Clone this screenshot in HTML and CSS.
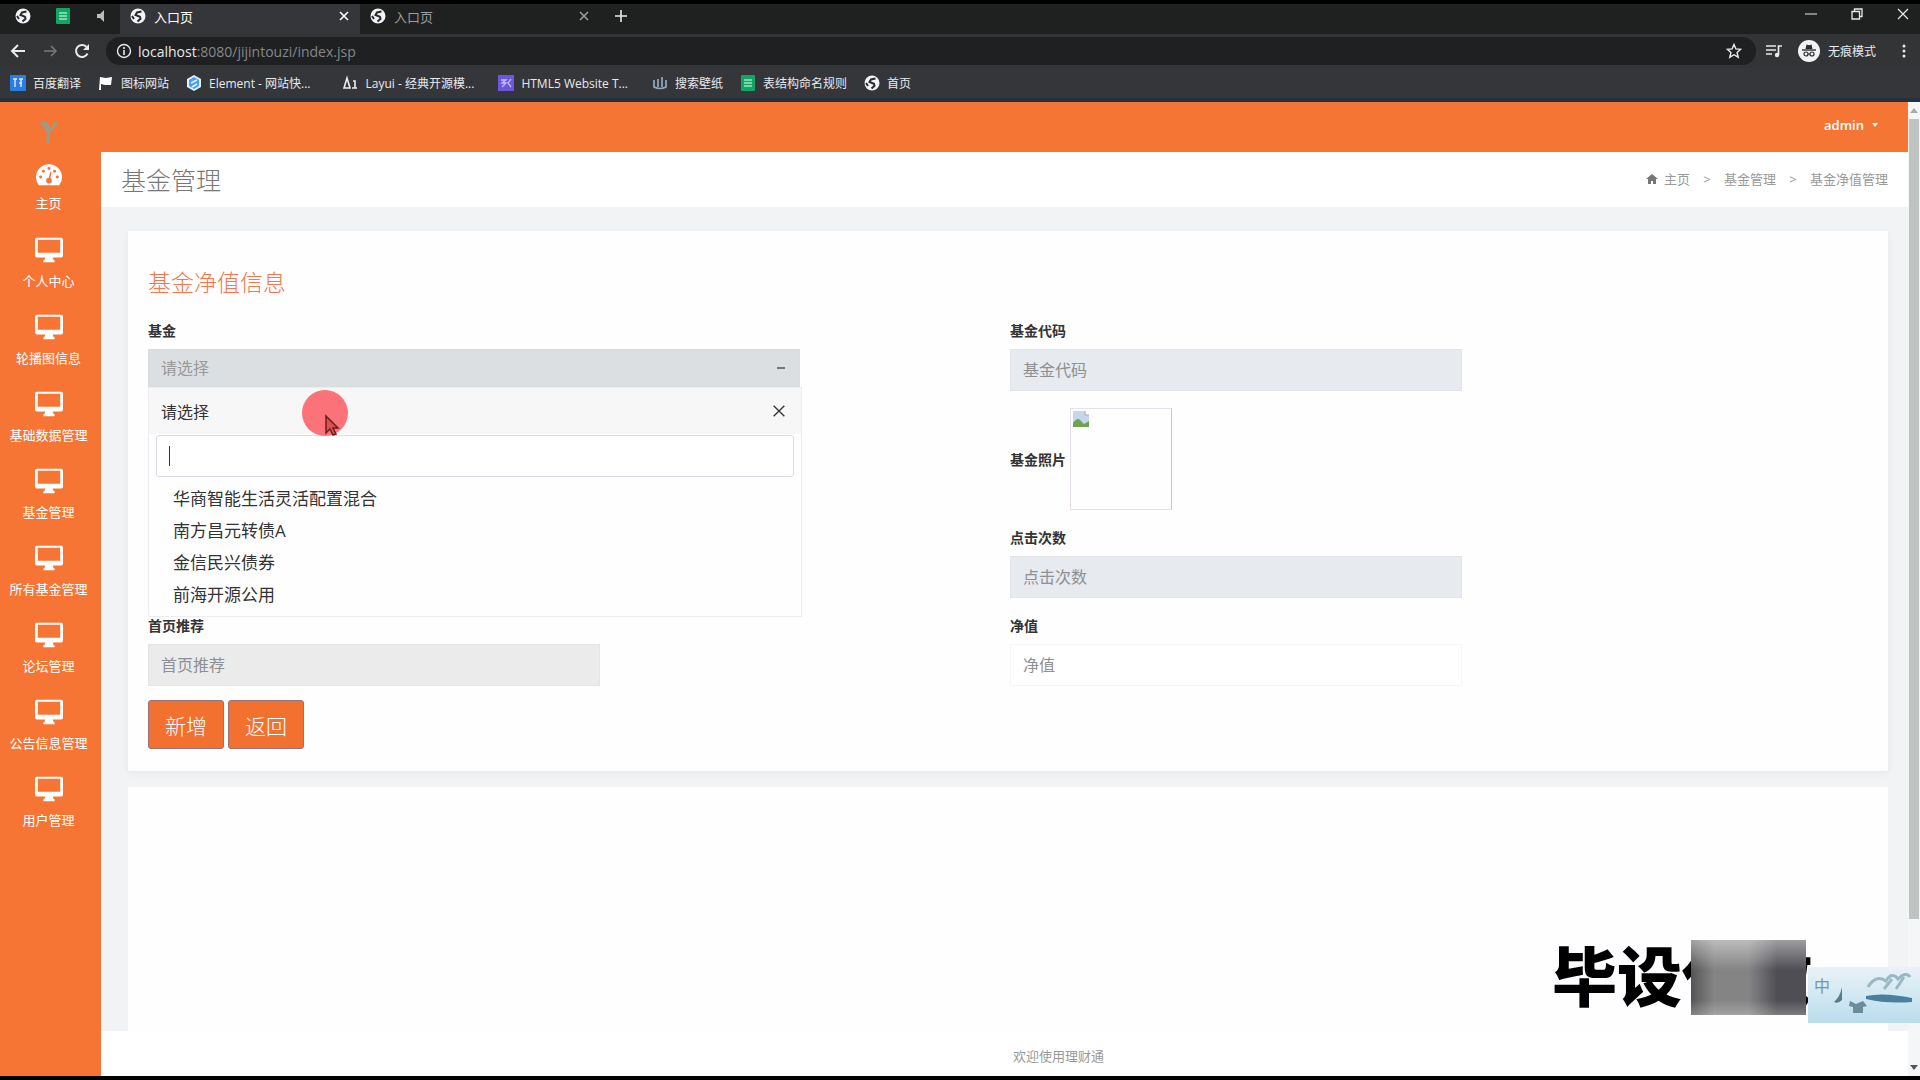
FILE: index.html
```html
<!DOCTYPE html>
<html lang="zh-CN">
<head>
  <meta charset="UTF-8" />
  <meta name="viewport" content="width=device-width, initial-scale=1.0" />
  <title>入口页</title>
  <link rel="stylesheet" href="styles.css">
</head>
<body>
  <!-- shared icons -->
  <svg class="sprite" aria-hidden="true">
    <symbol id="globe" viewBox="0 0 16 16">
      <circle cx="8" cy="8" r="7.5" fill="#f1f3f4"/>
      <path d="M11.500 3.500L7 4.500 5.500 7l4.500 1.800.5 2-3 2.700M2 8l2 3" fill="none" stroke="#292b2e" stroke-width="2"/>
    </symbol>
    <symbol id="sheet" viewBox="0 0 14 16">
      <rect width="14" height="16" rx="1" fill="#12a566"/>
      <path d="M3 5h8M3 8h8M3 11h8" stroke="#9ce5c1" stroke-width="1.5"/>
    </symbol>
    <symbol id="close" viewBox="0 0 12 12">
      <path d="M2 2l8 8M10 2l-8 8" fill="none" stroke="currentColor" stroke-width="1.6"/>
    </symbol>
    <symbol id="desktop" viewBox="0 0 30 26">
      <path d="M2 0h26a2 2 0 0 1 2 2v17a2 2 0 0 1-2 2H19l1 3h1v2H9v-2h1l1-3H2a2 2 0 0 1-2-2V2a2 2 0 0 1 2-2zm1 2v14h24V2z" fill="currentColor" fill-rule="evenodd"/>
    </symbol>
  </svg>

  <!-- BROWSER -->
  <div class="browser">
    <div class="tabs">
      <button class="pin" aria-label="首页"><svg class="i16"><use href="#globe"/></svg></button>
      <button class="pin" aria-label="表格"><svg class="i16"><use href="#sheet"/></svg></button>
      <button class="pin" aria-label="声音"><svg class="i16" viewBox="0 0 16 16"><path d="M2 6h3l4-4v12l-4-4H2z" fill="#b9bcc0"/></svg></button>
      <div class="tab active">
        <svg class="i16"><use href="#globe"/></svg><span>入口页</span>
        <button aria-label="关闭"><svg class="i12"><use href="#close"/></svg></button>
      </div>
      <div class="tab">
        <svg class="i16"><use href="#globe"/></svg><span>入口页</span>
        <button aria-label="关闭"><svg class="i12"><use href="#close"/></svg></button>
      </div>
      <button class="new-tab" aria-label="新标签页"><svg class="i16" viewBox="0 0 16 16"><path d="M8 2v12M2 8h12" stroke="currentColor" stroke-width="1.6"/></svg></button>
      <div class="win-btns">
        <button aria-label="最小化"><svg class="i12" viewBox="0 0 12 12"><path d="M0 6h12" stroke="currentColor"/></svg></button>
        <button aria-label="还原"><svg class="i12" viewBox="0 0 12 12"><path d="M1 3.500h7.500v7.500H1zM3.500 3V1H11v7.500H9" fill="none" stroke="currentColor" stroke-width="1.300"/></svg></button>
        <button aria-label="关闭窗口"><svg class="i12" viewBox="0 0 12 12"><path d="M1 1l10 10M11 1L1 11" stroke="currentColor" stroke-width="1.200"/></svg></button>
      </div>
    </div>

    <div class="toolbar">
      <button aria-label="后退"><svg class="i16" viewBox="0 0 16 16"><path d="M15 8H2M8 2L2 8l6 6" fill="none" stroke="currentColor" stroke-width="2"/></svg></button>
      <button class="dim" aria-label="前进"><svg class="i16" viewBox="0 0 16 16"><path d="M2 8h12M9 3l5 5-5 5" fill="none" stroke="currentColor" stroke-width="1.500"/></svg></button>
      <button aria-label="刷新"><svg class="i16" viewBox="0 0 16 16"><path d="M13.500 10.500A6 6 0 1 1 12.300 3.700" fill="none" stroke="currentColor" stroke-width="2"/><path d="M15 1v6H9z" fill="currentColor"/></svg></button>
      <div class="omnibox">
        <svg class="i16" viewBox="0 0 16 16"><circle cx="8" cy="8" r="6.500" fill="none" stroke="currentColor" stroke-width="1.400"/><path d="M8 7v5M8 4v2" stroke="currentColor" stroke-width="1.600"/></svg>
        <span class="url"><b>localhost</b>:8080/jijintouzi/index.jsp</span>
        <button aria-label="收藏"><svg class="i16" viewBox="0 0 16 16"><path d="M8 1.500l1.900 4.400 4.800.4-3.600 3.200 1.100 4.700L8 11.700l-4.200 2.500 1.100-4.700L1.300 6.300l4.800-.4z" fill="none" stroke="currentColor" stroke-width="1.400"/></svg></button>
      </div>
      <button class="queue" aria-label="媒体"><svg class="i16" viewBox="0 0 16 16"><path d="M0 3h10M0 7h10M0 11h6M12.500 12V3H16" fill="none" stroke="currentColor" stroke-width="1.700"/><circle cx="11" cy="12" r="2.200" fill="currentColor"/></svg></button>
      <div class="incognito">
        <svg viewBox="0 0 22 22"><circle cx="11" cy="11" r="11" fill="#f1f3f4"/><path d="M7.500 9l1-4.500 2.500.7 2.500-.7 1 4.500z" fill="#2b2d30"/><path d="M4 10h14" stroke="#2b2d30" stroke-width="1.400"/><circle cx="8" cy="14" r="2" fill="none" stroke="#2b2d30" stroke-width="1.200"/><circle cx="14" cy="14" r="2" fill="none" stroke="#2b2d30" stroke-width="1.200"/><path d="M10 14h2" stroke="#2b2d30"/></svg>
        <span>无痕模式</span>
      </div>
      <button class="more" aria-label="菜单"><svg class="i16" viewBox="0 0 16 16"><g fill="currentColor"><circle cx="8" cy="3" r="1.500"/><circle cx="8" cy="8" r="1.500"/><circle cx="8" cy="13" r="1.500"/></g></svg></button>
    </div>

    <nav class="bookmarks">
      <a href="#"><svg class="i16" viewBox="0 0 16 16"><rect width="16" height="16" rx="1" fill="#2a7de1"/><path d="M3 4h4M5 4v8M9 4h4M9 8h3M11 4v8" stroke="#d9ebff" stroke-width="1.400"/></svg>百度翻译</a>
      <a href="#"><svg class="i16" viewBox="0 0 16 16"><path d="M2 2l6 1 6-1-1 8H7l-4-1v6H1z" fill="#fff"/></svg>图标网站</a>
      <a href="#" class="wide"><svg class="i16" viewBox="0 0 16 16"><path d="M8 0l7 4v8l-7 4-7-4V4z" fill="#e4f1ff"/><path d="M8 2l5 3v6l-5 3-5-3V5z" fill="#409eff"/><path d="M5 8l6-3M6 12l5-3" fill="none" stroke="#eaf4ff" stroke-width="1.500"/></svg>Element - 网站快...</a>
      <a href="#" class="layui wide"><svg class="i16" viewBox="0 0 16 16"><path d="M4 3l3 10H1zM10 6h2v7M9 13h5" fill="none" stroke="#eee" stroke-width="1.600"/></svg>Layui - 经典开源模...</a>
      <a href="#" class="wide"><svg class="i16" viewBox="0 0 16 16"><rect width="16" height="16" fill="#6c55e0"/><path d="M3 5h5l-4 3h4l-4 4M13 4l-3 4 3 4" fill="none" stroke="#c5baff" stroke-width="1.300"/></svg>HTML5 Website T...</a>
      <a href="#"><svg class="i16" viewBox="0 0 16 16"><path d="M2 5v7q6 3 12 0V5M6 4v8M10 2v10" fill="none" stroke="#8faabd" stroke-width="1.700"/></svg>搜索壁纸</a>
      <a href="#"><svg class="i16"><use href="#sheet"/></svg>表结构命名规则</a>
      <a href="#"><svg class="i16"><use href="#globe"/></svg>首页</a>
    </nav>
  </div>

  <!-- PAGE -->
  <div class="app">
    <aside class="sidebar">
      <svg class="logo" viewBox="0 0 24 24"><path d="M4 2l7 9v12M20 2l-9 11M8 2l4 7" fill="none" stroke="#a09a80" stroke-width="3"/></svg>
      <a href="#" class="home"><svg viewBox="0 0 30 26"><path d="M4 23a14 14 0 1 1 22 0z" fill="currentColor"/><g fill="#f4733d"><circle cx="6" cy="14" r="1.600"/><circle cx="9" cy="8" r="1.600"/><circle cx="15" cy="5" r="1.600"/><circle cx="21" cy="8" r="1.600"/><circle cx="24" cy="14" r="1.600"/><circle cx="15" cy="18" r="3"/></g><path d="M15 18l2-9" stroke="#f4733d" stroke-width="1.600"/></svg>主页</a>
      <a href="#"><svg><use href="#desktop"/></svg>个人中心</a>
      <a href="#"><svg><use href="#desktop"/></svg>轮播图信息</a>
      <a href="#"><svg><use href="#desktop"/></svg>基础数据管理</a>
      <a href="#"><svg><use href="#desktop"/></svg>基金管理</a>
      <a href="#"><svg><use href="#desktop"/></svg>所有基金管理</a>
      <a href="#"><svg><use href="#desktop"/></svg>论坛管理</a>
      <a href="#"><svg><use href="#desktop"/></svg>公告信息管理</a>
      <a href="#"><svg><use href="#desktop"/></svg>用户管理</a>
    </aside>

    <div class="main">
      <header class="topbar"><button class="user">admin <i class="caret"></i></button></header>

      <div class="page-title">
        <h1>基金管理</h1>
        <nav class="crumbs">
          <svg class="i12" viewBox="0 0 12 12"><path d="M6 1l6 5h-2v5H7V8H5v3H2V6H0z" fill="#777"/></svg>
          <a href="#">主页</a><i>&gt;</i><a href="#">基金管理</a><i>&gt;</i><span>基金净值管理</span>
        </nav>
      </div>

      <div class="content">
        <form class="card">
          <h2>基金净值信息</h2>
          <div class="fields">
            <div class="group picker">
              <label for="fund">基金</label>
              <select id="fund"><option>请选择</option></select>

              <!-- open list -->
              <div class="dropdown">
                <div class="current"><span>请选择</span><button type="button" aria-label="清除"><svg class="i16" viewBox="0 0 12 12"><path d="M2 2l8 8M10 2l-8 8" stroke="currentColor"/></svg></button></div>
                <div class="search"><input type="text" aria-label="搜索基金"><i class="cursor-bar"></i></div>
                <ul>
                  <li>华商智能生活灵活配置混合</li>
                  <li>南方昌元转债A</li>
                  <li>金信民兴债券</li>
                  <li>前海开源公用</li>
                </ul>
                <svg class="pointer" viewBox="0 0 48 48"><circle cx="24" cy="24" r="23" fill="#fb7378"/><path d="M25 27v17l4-4 3 6 3-1-3-6h5z" fill="#d8534f" stroke="#6a1d1d" stroke-width="1.500"/></svg>
              </div>
            </div>
            <div class="group">
              <label for="code">基金代码</label>
              <input id="code" type="text" placeholder="基金代码" readonly>
            </div>
            <div class="group photo">
              <span class="label">基金照片</span>
              <div class="thumb"><svg class="i16" viewBox="0 0 16 16"><path d="M0 0h12l4 4v12H0z" fill="#c5d6ef"/><path d="M12 0v4h4" fill="#fff" stroke="#aaa"/><path d="M0 16v-4q5-7 8-2l3 3 5-3v6z" fill="#6fa34f"/></svg></div>
            </div>
            <div class="group right">
              <label for="clicks">点击次数</label>
              <input id="clicks" type="text" placeholder="点击次数" readonly>
            </div>
            <div class="group">
              <label for="recommend">首页推荐</label>
              <input id="recommend" class="gray" type="text" placeholder="首页推荐" readonly>
            </div>
            <div class="group">
              <label for="value">净值</label>
              <input id="value" type="text" placeholder="净值">
            </div>
          </div>
          <div class="actions">
            <button type="button">新增</button>
            <button type="button">返回</button>
          </div>
        </form>
        <div class="blank"></div>
      </div>

      <footer>欢迎使用理财通</footer>
    </div>

    <div class="scrollbar"><i class="arrow up"></i><div class="thumb-bar"></div><i class="arrow"></i></div>
  </div>

  <!-- OVERLAYS -->
  <div class="watermark">毕设代做<div class="mask"></div></div>
  <div class="ime">
    <span>中</span>
    <svg viewBox="0 0 82 56"><path d="M12 20v13q-4 4-8 2 6-5 8-15z" fill="#587b8c"/><path d="M20 34l6 3 7-3 4 5-4 1v6h-10v-6l-4-1z" fill="#6c8c99"/><path d="M36 29q18-4 46 2v4q-26 2-46-3z" fill="#4b7f9e"/><path d="M38 20q8-13 18-6 6-10 12-2 8-8 12-2M54 22l8-10M66 22l8-12" fill="none" stroke="#9bb8c5" stroke-width="3"/></svg>
  </div>
</body>
</html>
```
FILE: styles.css
```css
*{margin:0;padding:0;box-sizing:border-box;}
body{
  height:100vh;
  display:flex;flex-direction:column;
  border-top:4px solid #000;
  border-bottom:4px solid #000;
  font-family:"Open Sans","Noto Sans CJK SC",sans-serif;
  font-size:14px;
  color:#333;
  background:#fff;
  overflow:hidden;
}
a{color:inherit;text-decoration:none;}
button{font:inherit;color:inherit;background:none;border:0;}
svg{display:block;flex:none;}
i{font-style:normal;}
.sprite{position:absolute;width:0;height:0;}
.i16{width:16px;height:16px;}
.i12{width:12px;height:12px;}

/* ---------- BROWSER ---------- */
.browser{background:#35363a;color:#e8eaed;border-bottom:4px solid #26303b;}
.tabs{display:flex;align-items:center;height:30px;padding-bottom:6px;background:#1f2120;}
.pin{width:40px;padding-left:15px;}
.tab{display:flex;align-items:center;gap:8px;width:240px;height:24px;padding:0 10px;font-size:13px;color:#9a9da1;}
.tab span{flex:1;}
.tab.active{background:#35363a;color:#fff;box-shadow:0 6px 0 #35363a;}
.new-tab{margin-left:13px;}
.win-btns{display:flex;gap:34px;margin-left:auto;padding:0 11px 4px 0;}
.toolbar{display:flex;align-items:center;gap:16px;height:34px;padding:0 8px 0 10px;background:#323436;}
.toolbar .dim{color:#77797c;}
.omnibox{flex:1;display:flex;align-items:center;gap:6px;height:28px;padding:0 14px 0 10px;border-radius:14px;background:#1e2022;}
.url{flex:1;font-size:14px;color:#85888c;}
.url b{font-weight:400;color:#e8eaed;}
.queue{margin-left:-6px;}
.incognito{display:flex;align-items:center;gap:8px;font-size:12px;}
.incognito svg{width:22px;height:22px;}
.more{margin-left:4px;}
.bookmarks{display:flex;align-items:center;gap:17px;height:30px;padding-left:10px;font-size:12px;}
.bookmarks a{display:flex;align-items:center;gap:7px;white-space:nowrap;}
.bookmarks .layui{margin-left:8px;}
.bookmarks .wide{margin-right:7px;}

/* ---------- LAYOUT ---------- */
.app{flex:1;display:flex;min-height:0;}
.sidebar{width:101px;padding-right:4px;background:#f67534;color:#fff;text-align:center;}
.logo{width:24px;height:24px;margin:18px auto 16px;}
.sidebar a{display:flex;flex-direction:column;align-items:center;gap:8px;height:77px;font-size:13px;line-height:20px;white-space:nowrap;}
.sidebar a svg{width:28px;height:26px;}
.sidebar .home{gap:4px;padding-top:3px;}
.main{flex:1;display:flex;flex-direction:column;min-width:0;}
.topbar{display:flex;justify-content:flex-end;align-items:center;height:50px;padding:0 30px 4px;background:#f57634;color:#fff;}
.user{display:flex;align-items:center;gap:8px;font-size:13px;font-weight:600;}
.caret{border:3px solid transparent;border-top:4px solid #fff;border-bottom:0;}
.page-title{display:flex;justify-content:space-between;align-items:center;height:55px;padding:0 20px 2px;}
.page-title h1{font-size:25px;font-weight:300;color:#777;}
.crumbs{display:flex;align-items:center;font-size:13px;color:#999;}
.crumbs .i12{margin-right:6px;}
.crumbs i{width:34px;text-align:center;}
.content{flex:1;display:flex;flex-direction:column;gap:16px;padding:24px 20px 0 27px;background:#f1f3f4;}
.blank{flex:1;background:#fefdff;}
footer{height:45px;padding-left:108px;line-height:50px;text-align:center;font-size:13px;color:#999;}

/* ---------- FORM ---------- */
.card{padding:36px 16px 22px 20px;background:#fefeff;box-shadow:0 2px 6px #e8e8ee;}
.card h2{margin-bottom:23px;font-size:23px;font-weight:300;line-height:30px;color:#f9744a;}
.fields{display:grid;grid-template-columns:1fr 1fr;row-gap:17px;margin-bottom:14px;}
.group{position:relative;}
.group label,.label{display:block;margin-bottom:8px;font-size:14px;font-weight:700;line-height:21px;color:#333;}
.group input,.group select{
  display:block;width:452px;height:42px;padding:0 12px;
  border:1px solid #e2e4e8;background:#e7eaee;
  font:inherit;font-size:16px;color:#888;
}
.group input::placeholder{color:#8e8f92;}
.group input.gray{background:#ebebec;}
.group #value{background:#fff;border-color:#f7f5f8;}
.group select{
  appearance:none;width:652px;height:38px;
  border-color:#dadddf;
  background:#dcdfe2 linear-gradient(#777,#777) no-repeat right 14px center/8px 2px;
  color:#999;
}
.photo,.right{grid-column:2;}
.photo{display:flex;align-items:center;gap:4px;}
.photo .label{margin:0;}
.thumb{width:102px;height:102px;padding:2px;border:1px solid #e6dfea;border-right-color:#c9c6cc;}

.dropdown{position:absolute;top:67px;left:0;z-index:2;width:654px;height:230px;border:1px solid #ececf2;background:#fefeff;}
.current{display:flex;justify-content:space-between;align-items:center;height:46px;padding:0 14px 0 12px;background:#f7f7f8;font-size:16px;}
.search{position:relative;padding:1px 7px;}
.group .search input{width:100%;height:42px;border:1px solid #dddce3;background:#fff;border-radius:3px;}
.cursor-bar{position:absolute;left:20px;top:12px;width:1px;height:20px;background:#333;}
.dropdown ul{list-style:none;padding:5px 24px;font-size:17px;line-height:32px;}
.pointer{position:absolute;left:152px;top:1px;width:48px;height:48px;}

.actions{display:flex;gap:4px;}
.actions button{width:76px;height:49px;border:1px solid #98727d;border-radius:3px;background:#f3712f;font-size:21px;font-weight:300;color:#fff;}

/* ---------- SCROLLBAR ---------- */
.scrollbar{display:flex;flex-direction:column;align-items:center;justify-content:space-between;width:12px;background:#f5f6f7;}
.thumb-bar{width:10px;height:800px;margin-bottom:auto;background:#bfc3c2;}
.arrow{margin:6px 0;border:4px solid transparent;border-top:5px solid #555;border-bottom:0;}
.arrow.up{transform:rotate(180deg);border-top-color:#aaa;}

/* ---------- OVERLAYS ---------- */
.watermark{position:absolute;right:108px;bottom:56px;z-index:3;font-size:65px;font-weight:900;line-height:96px;color:#000;white-space:nowrap;}
.mask{
  position:absolute;right:6px;top:12px;width:115px;height:75px;
  background:
    linear-gradient(rgba(255,255,255,.45),transparent 40%,transparent 80%,rgba(255,255,255,.25)),
    linear-gradient(90deg,#555,#858485 20%,#858485 50%,#4f4e54 75%,#4f4e54);
}
.ime{position:absolute;right:0;bottom:57px;z-index:4;display:flex;width:112px;height:56px;background:linear-gradient(#eaf2f8,#d2e8f2 50%,#b9dcec);}
.ime span{padding:6px 0 0 6px;font-size:16px;color:#7893a2;}
.ime svg{width:82px;height:56px;}
```
